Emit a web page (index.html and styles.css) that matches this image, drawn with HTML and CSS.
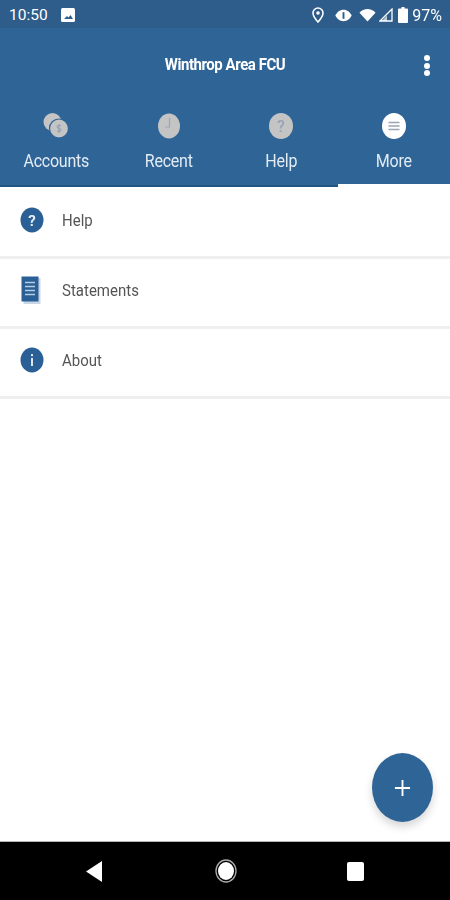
FILE: index.html
```html
<!DOCTYPE html>
<html lang="en">
<head>
<meta charset="utf-8">
<title>Winthrop Area FCU</title>
<link rel="stylesheet" href="styles.css">
</head>
<body>
<div class="app">
  <div class="status">
    <span class="time">10:50</span>
    <svg class="st-img" viewBox="0 0 14 14"><rect x="0" y="0" width="14" height="14" rx="1.5" fill="#fff"/><path d="M3 11l3-3 1.500 1.500L9.500 7 12 11z" fill="#2e5d8c"/></svg>
    <span class="status-spacer"></span>
    <svg class="st-pin" viewBox="0 0 12 16"><path d="M6 1a5 5 0 0 0-5 5c0 3.500 5 9 5 9s5-5.500 5-9a5 5 0 0 0-5-5z" fill="none" stroke="#fff" stroke-width="1.600"/><circle cx="6" cy="6" r="1.800" fill="#fff"/></svg>
    <svg class="st-eye" viewBox="0 0 18 13"><path d="M9 0.500C5 0.500 2 3 0.500 6.500 2 10 5 12.500 9 12.500s7-2.500 8.500-6C16 3 13 0.500 9 0.500z" fill="#fff"/><rect x="8" y="3" width="2" height="7" fill="#2e5d8c"/></svg>
    <svg class="st-wifi" viewBox="0 0 18 14"><path d="M0.500 4.500C5 -0.500 13 -0.500 17.500 4.500L9 14z" fill="#fff"/></svg>
    <svg class="st-sig" viewBox="0 0 14 14"><path d="M13 1v12H1z" fill="none" stroke="#fff" stroke-width="1.300"/><path d="M8 7.500l0 5.500H3z" fill="#fff" opacity=".7"/></svg>
    <svg class="st-bat" viewBox="0 0 10 16"><path d="M3.500 0h3v1.500H9a1 1 0 0 1 1 1V15a1 1 0 0 1-1 1H1a1 1 0 0 1-1-1V2.500a1 1 0 0 1 1-1h2.500z" fill="#fff"/></svg>
    <span class="pct">97%</span>
  </div>

  <header class="appbar">
    <span class="title">Winthrop Area FCU</span>
    <span class="kebab"><i></i><i></i><i></i></span>
  </header>

  <nav class="tabs">
    <div class="tab">
      <svg class="tab-icon" viewBox="0 0 26 28"><circle cx="9.500" cy="10" r="9" fill="#c4c4c4"/><circle cx="16" cy="16.500" r="9.500" fill="#c4c4c4" stroke="#2f6497" stroke-width="1.200"/><path d="M16 12v9M18 14c-1.500-1-4-.8-4 .8 0 2.200 4 1 4 3.200 0 1.500-2.500 1.700-4 .8" fill="none" stroke="#8f9db5" stroke-width="1"/></svg>
      <span class="tab-label">Accounts</span>
    </div>
    <div class="tab">
      <svg class="tab-icon" viewBox="0 0 26 28"><ellipse cx="13" cy="14" rx="11" ry="12.500" fill="#c4c4c4"/><path d="M13.500 6v9H9" fill="none" stroke="#9aa5b8" stroke-width="1.200"/></svg>
      <span class="tab-label">Recent</span>
    </div>
    <div class="tab">
      <svg class="tab-icon" viewBox="0 0 26 28"><ellipse cx="13" cy="14" rx="12" ry="13" fill="#c4c4c4"/><text x="13" y="19.500" class="q-grey">?</text></svg>
      <span class="tab-label">Help</span>
    </div>
    <div class="tab tab-active">
      <svg class="tab-icon" viewBox="0 0 26 28"><ellipse cx="13" cy="14" rx="12" ry="13" fill="#fff"/><path d="M7.500 10.500h11M7.500 14h11M7.500 17.500h11" stroke="#9aa5b5" stroke-width="1.300"/></svg>
      <span class="tab-label">More</span>
    </div>
  </nav>

  <main class="list">
    <div class="row">
      <svg class="row-icon" viewBox="0 0 24 26"><ellipse cx="12" cy="13" rx="11.500" ry="12.500" fill="#2a6096"/><text x="12" y="18.500" class="q-white">?</text></svg>
      <span class="row-label">Help</span>
    </div>
    <div class="row">
      <svg class="row-icon" viewBox="0 0 24 28"><rect x="3.500" y="2" width="17" height="26" fill="#c9d6e6"/><rect x="1.500" y="0.500" width="17" height="25" fill="#2a6096"/><path d="M5 6.500h10M5 10.500h10M5 14.500h10M5 18.500h10" stroke="#b9cde2" stroke-width="1.500"/></svg>
      <span class="row-label">Statements</span>
    </div>
    <div class="row">
      <svg class="row-icon" viewBox="0 0 24 26"><ellipse cx="12" cy="13" rx="11.500" ry="12.500" fill="#2a6096"/><rect x="11" y="11" width="2" height="8" fill="#dce6f0"/><rect x="11" y="7" width="2" height="2.200" fill="#dce6f0"/></svg>
      <span class="row-label">About</span>
    </div>
  </main>

  <button class="fab" aria-label="Add"><svg viewBox="0 0 18 20"><path d="M9 1.500v17M1 10h16" stroke="#fff" stroke-width="2"/></svg></button>

  <footer class="navbar">
    <svg class="nav-back" viewBox="0 0 16 21"><path d="M16 0v21L0 10.500z" fill="#fff"/></svg>
    <svg class="nav-home" viewBox="0 0 22 24"><ellipse cx="11" cy="12" rx="8" ry="9" fill="#fff"/><ellipse cx="11" cy="12" rx="10" ry="11" fill="none" stroke="#aaa" stroke-width="1.300"/></svg>
    <span class="nav-recent"></span>
  </footer>
</div>
</body>
</html>
```

FILE: styles.css
```css
* { box-sizing: border-box; }
html, body { margin: 0; padding: 0; }
body { font-family: Roboto, "Liberation Sans", sans-serif; background: #fff; }
.app { position: relative; width: 450px; height: 900px; display: flex; flex-direction: column; overflow: hidden; filter: blur(0.5px); }

.status { height: 28px; background: #2e5c8b; color: #fff; display: flex; align-items: center; padding: 2px 8px 0 9px; flex: none; }
.time { font-size: 15.5px; width: 52px; }
.st-img { width: 14px; height: 14px; margin-left: 0; }
.status-spacer { flex: 1; }
.st-pin { width: 12px; height: 16px; margin-right: 11px; }
.st-eye { width: 17px; height: 13px; margin-right: 7px; }
.st-wifi { width: 17px; height: 14px; margin-right: 3px; }
.st-sig { width: 14px; height: 14px; margin-right: 5px; }
.st-bat { width: 10px; height: 16px; margin-right: 4px; }
.pct { font-size: 16px; }

.appbar { height: 72px; background: #2f6497; display: flex; align-items: center; justify-content: center; position: relative; flex: none; padding-bottom: 1px; }
.title { color: #fff; font-weight: 700; font-size: 15px; letter-spacing: -0.45px; transform: scaleY(1.15); }
.kebab { position: absolute; right: 20px; top: 27px; display: flex; flex-direction: column; gap: 1.5px; }
.kebab i { display: block; width: 6px; height: 6px; border-radius: 50%; background: #fff; }

.tabs { height: 87px; background: #2f6497; display: flex; border-bottom: 2px solid #235482; flex: none; }
.tab { flex: 1; display: flex; flex-direction: column; align-items: center; padding-top: 12px; margin-bottom: -2px; border-bottom: 3px solid transparent; }
.tab-active { border-bottom-color: #fff; }
.tab-icon { width: 26px; height: 28px; }
.tab-label { color: #e3ebf3; font-size: 16px; margin-top: 11px; letter-spacing: -0.25px; transform: scaleY(1.1); }
.q-grey { font-family: Roboto, sans-serif; font-size: 16px; font-weight: 500; fill: #98a3b4; text-anchor: middle; }
.q-white { font-family: Roboto, sans-serif; font-size: 15px; font-weight: 700; fill: #e6edf5; text-anchor: middle; }

.list { flex: 1; padding-top: 2px; }
.row { height: 70px; display: flex; align-items: center; padding: 0 0 5px 20px; border-bottom: 3px solid #efefef; }
.row-icon { width: 24px; height: 28px; flex: none; }
.row-label { margin-left: 18px; font-size: 15px; color: #555; transform: scaleY(1.1); }

.fab { position: absolute; left: 372px; top: 753px; width: 61px; height: 69px; border: 0; padding: 0; border-radius: 50%; background: #2f6497; box-shadow: 0 5px 9px rgba(0,0,0,.16); display: flex; align-items: center; justify-content: center; }
.fab svg { width: 17px; height: 20px; }

.navbar { height: 59px; background: #000; border-top: 1px solid #b5b5b5; display: flex; align-items: center; flex: none; padding: 0 0 0 86px; }
.nav-back { width: 16px; height: 21px; }
.nav-home { width: 22px; height: 24px; margin-left: 113px; }
.nav-recent { width: 17px; height: 19px; margin-left: 110px; background: #fff; border-radius: 2px; }
```
